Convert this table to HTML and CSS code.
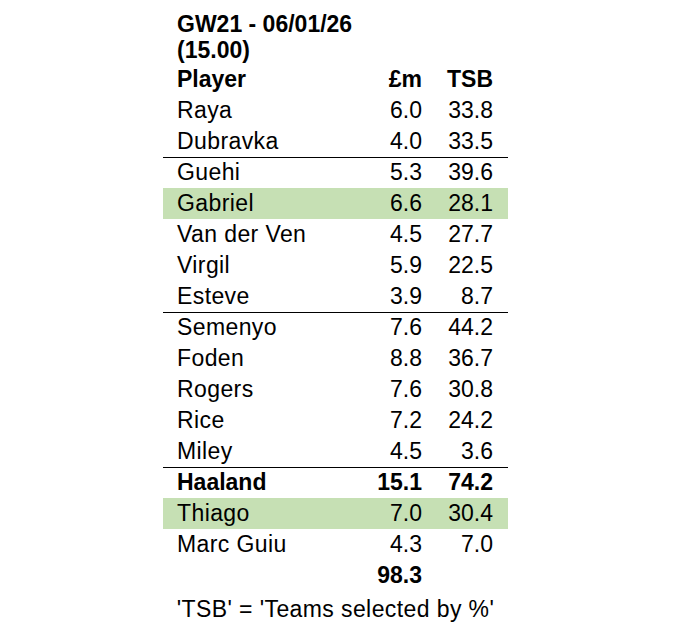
FILE: index.html
```html
<!DOCTYPE html>
<html lang="en">
<head>
    <meta charset="UTF-8">
    <title>GW21 team</title>
    <link rel="stylesheet" href="styles.css">
</head>
<body>
    <div class="sheet">
        <div class="title">
            <div>GW21 - 06/01/26</div>
            <div>(15.00)</div>
        </div>

        <div class="row head">
            <span>Player</span><span class="num">£m</span><span class="num">TSB</span>
        </div>

        <!-- Goalkeepers -->
        <div class="row"><span class="name">Raya</span><span class="num">6.0</span><span class="num">33.8</span></div>
        <div class="row"><span class="name">Dubravka</span><span class="num">4.0</span><span class="num">33.5</span></div>

        <!-- Defenders -->
        <div class="row split"><span class="name">Guehi</span><span class="num">5.3</span><span class="num">39.6</span></div>
        <div class="row pick"><span class="name">Gabriel</span><span class="num">6.6</span><span class="num">28.1</span></div>
        <div class="row"><span class="name">Van der Ven</span><span class="num">4.5</span><span class="num">27.7</span></div>
        <div class="row"><span class="name">Virgil</span><span class="num">5.9</span><span class="num">22.5</span></div>
        <div class="row"><span class="name">Esteve</span><span class="num">3.9</span><span class="num">8.7</span></div>

        <!-- Midfielders -->
        <div class="row split"><span class="name">Semenyo</span><span class="num">7.6</span><span class="num">44.2</span></div>
        <div class="row"><span class="name">Foden</span><span class="num">8.8</span><span class="num">36.7</span></div>
        <div class="row"><span class="name">Rogers</span><span class="num">7.6</span><span class="num">30.8</span></div>
        <div class="row"><span class="name">Rice</span><span class="num">7.2</span><span class="num">24.2</span></div>
        <div class="row"><span class="name">Miley</span><span class="num">4.5</span><span class="num">3.6</span></div>

        <!-- Forwards -->
        <div class="row split head"><span>Haaland</span><span class="num">15.1</span><span class="num">74.2</span></div>
        <div class="row pick"><span class="name">Thiago</span><span class="num">7.0</span><span class="num">30.4</span></div>
        <div class="row"><span class="name">Marc Guiu</span><span class="num">4.3</span><span class="num">7.0</span></div>

        <div class="row head"><span></span><span class="num">98.3</span><span></span></div>

        <div class="note">'TSB' = 'Teams selected by %'</div>
    </div>
</body>
</html>
```

FILE: styles.css
```css
body {
    margin: 0;
    padding: 0;
    background-color: #ffffff;
    color: #000000;
    font-family: "Liberation Sans", Arial, sans-serif;
    font-size: 23px;
}
.sheet {
    width: 345px;
    margin-left: 163px;
    padding-top: 11px;
}
.title {
    padding-left: 14px;
    font-weight: bold;
    line-height: 26px;
    padding-bottom: 1px;
}
.row {
    display: grid;
    grid-template-columns: 1fr 60px 71px;
    height: 31px;
    line-height: 31px;
    padding: 0 15px 0 14px;
    box-sizing: border-box;
}
.row.head {
    font-weight: bold;
}
.row.split {
    border-top: 1px solid #000000;
    line-height: 29px;
}
.row.pick {
    background-color: #c6e0b4;
}
.name {
    letter-spacing: 0.4px;
}
.num {
    text-align: right;
}
.note {
    text-align: center;
    line-height: 31px;
    padding-top: 3px;
    letter-spacing: 0.4px;
}
```
